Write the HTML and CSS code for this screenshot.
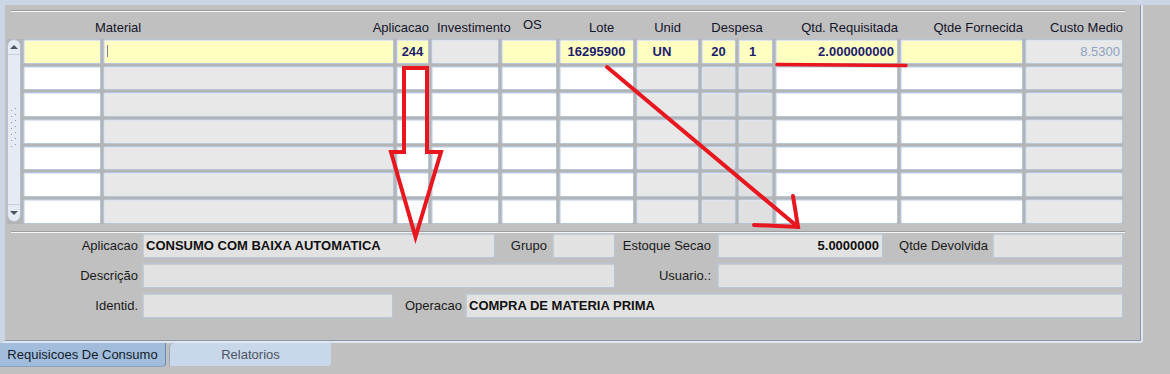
FILE: index.html
```html
<!DOCTYPE html>
<html lang="pt-BR">
<head>
    <meta charset="UTF-8">
    <title>Requisicoes De Consumo</title>
    <link rel="stylesheet" href="styles.css">
</head>
<body>

    <div class="topbar"></div>

    <div class="panel">
        <div class="rule rule-top"></div>

        <!-- cabecalho do bloco -->
        <div class="grid-head">
            <div class="h h-mat">Material</div>
            <div class="h h-apl">Aplicacao</div>
            <div class="h h-inv">Investimento</div>
            <div class="h h-os">OS</div>
            <div class="h h-lote">Lote</div>
            <div class="h h-unid">Unid</div>
            <div class="h h-desp">Despesa</div>
            <div class="h h-qtd">Qtd. Requisitada</div>
            <div class="h h-forn">Qtde Fornecida</div>
            <div class="h h-custo">Custo Medio</div>
        </div>

        <!-- linhas do bloco -->
        <div class="grid" id="grid">
            <div class="scroll">
                <div class="sb-btn sb-up"><span class="tri-up"></span></div>
                <div class="sb-track">
                    <svg class="grip" width="8" height="42" viewBox="0 0 8 42">
                        <g fill="#8c98ac">
                            <rect x="1" y="3" width="1" height="1"/><rect x="5" y="1" width="1" height="1"/>
                            <rect x="1" y="9" width="1" height="1"/><rect x="5" y="7" width="1" height="1"/>
                            <rect x="1" y="15" width="1" height="1"/><rect x="5" y="13" width="1" height="1"/>
                            <rect x="1" y="21" width="1" height="1"/><rect x="5" y="19" width="1" height="1"/>
                            <rect x="1" y="27" width="1" height="1"/><rect x="5" y="25" width="1" height="1"/>
                            <rect x="1" y="33" width="1" height="1"/><rect x="5" y="31" width="1" height="1"/>
                            <rect x="1" y="39" width="1" height="1"/><rect x="5" y="37" width="1" height="1"/>
                        </g>
                    </svg>
                </div>
                <div class="sb-btn sb-down"><span class="tri-down"></span></div>
            </div>

            <!-- registro atual -->
            <div class="cell cur"></div>
            <div class="cell cur"><span class="caret"></span></div>
            <div class="cell cur num c">244</div>
            <div class="cell ro"></div>
            <div class="cell cur"></div>
            <div class="cell cur num c">16295900</div>
            <div class="cell cur num c unid">UN</div>
            <div class="cell cur num c">20</div>
            <div class="cell cur num c one">1</div>
            <div class="cell cur num r">2.000000000</div>
            <div class="cell cur"></div>
            <div class="cell ro muted r">8.5300</div>
        </div>

        <div class="rule rule-mid"></div>

        <!-- detalhes -->
        <div class="detail">
            <div class="drow">
                <div class="lbl w131">Aplicacao</div>
                <div class="fld w353">CONSUMO COM BAIXA AUTOMATICA</div>
                <div class="lbl w57">Grupo</div>
                <div class="fld w63"></div>
                <div class="lbl w102">Estoque Secao</div>
                <div class="fld w166 r">5.0000000</div>
                <div class="lbl w109">Qtde Devolvida</div>
                <div class="fld w131f"></div>
            </div>
            <div class="drow">
                <div class="lbl w131">Descrição</div>
                <div class="fld w473"></div>
                <div class="lbl w102">Usuario.:</div>
                <div class="fld w406"></div>
            </div>
            <div class="drow">
                <div class="lbl w131">Identid.</div>
                <div class="fld w251"></div>
                <div class="lbl w72">Operacao</div>
                <div class="fld w658">COMPRA DE MATERIA PRIMA</div>
            </div>
        </div>
    </div>

    <div class="tabs">
        <div class="tab tab-on">Requisicoes De Consumo</div>
        <div class="tab tab-off">Relatorios</div>
    </div>

    <!-- marcacoes em vermelho -->
    <svg class="marks" width="1170" height="374" viewBox="0 0 1170 374">
        <g fill="none" stroke="#e8161e" stroke-width="4" stroke-linecap="round" stroke-linejoin="miter">
            <polygon points="404,68 427,68 427,152 441,152 415.5,237 391,152 404,152"/>
            <line x1="607" y1="67" x2="798" y2="227"/>
            <polyline points="793,196 798,227 754,225"/>
            <line x1="777" y1="64.5" x2="906" y2="65.5" stroke-width="3.5"/>
        </g>
    </svg>

    <script>
        // linhas vazias do bloco
        const grid = document.getElementById('grid');
        const emptyRow = ['', 'ro', '', '', '', '', 'ro', 'ro2', 'ro2', '', '', 'ro'];
        let html = '';
        for (let i = 0; i < 6; i++) {
            emptyRow.forEach(kind => {
                html += `<div class="cell ${kind}"></div>`;
            });
        }
        grid.insertAdjacentHTML('beforeend', html);
    </script>
</body>
</html>
```

FILE: styles.css
```css
/* base */
* {
    box-sizing: border-box;
}

body {
    margin: 0;
    width: 1170px;
    height: 374px;
    overflow: hidden;
    position: relative;
    background-color: #c0c0c0;
    font-family: "Liberation Sans", Arial, sans-serif;
    font-size: 13px;
    color: #161616;
}

.topbar {
    height: 5px;
    background-color: #ccd5e4;
}

.panel {
    width: 1143px;
    height: 338px;
    padding-top: 5px;
    border-left: 5px solid #ccd5e4;
    border-right: 2px solid #e0e7f2;
    border-bottom: 2px solid #e0e7f2;
    border-bottom-right-radius: 3px;
    box-shadow: inset -1px -1px 0 #8e97a6;
}

/* linhas separadoras */
.rule {
    margin-left: 6px;
    width: 1114px;
    height: 2px;
    border-top: 1px solid #9c9c9c;
    border-bottom: 1px solid #f6f6f6;
}

.rule-mid {
    margin-top: 7px;
}

/* bloco de linhas */
.grid-head,
.grid {
    display: grid;
    grid-template-columns: 14px 78px 291px 33px 68px 56px 75px 63px 35px 35px 123px 123px 98px;
    column-gap: 2px;
    margin-left: 2px;
    width: 1116px;
}

.grid-head {
    height: 27px;
}

.h {
    display: flex;
    align-items: flex-start;
    padding-top: 8px;
    white-space: nowrap;
    line-height: 15px;
    color: #14142a;
}

.h-mat { grid-column: 3; margin-left: -8px; }
.h-apl { grid-column: 4; justify-content: flex-end; }
.h-inv { grid-column: 5; padding-left: 6px; }
.h-os { grid-column: 6; padding-left: 22px; padding-top: 5px; }
.h-lote { grid-column: 7; padding-left: 30px; }
.h-unid { grid-column: 8; justify-content: center; }
.h-desp { grid-column: 9 / span 2; justify-content: center; }
.h-qtd { grid-column: 11; justify-content: flex-end; }
.h-forn { grid-column: 12; justify-content: flex-end; }
.h-custo { grid-column: 13; justify-content: flex-end; }

.grid {
    grid-auto-rows: 24.67px;
    row-gap: 2px;
    background-color: #b4b4b4;
}

.cell {
    display: flex;
    align-items: center;
    padding: 0 3px;
    background-color: #ffffff;
    border: 1px solid #b7c5d8;
    border-radius: 2px;
    box-shadow: inset 1px 1px 0 #dde5f0;
    white-space: nowrap;
}

.cell.cur { background-color: #ffffc2; }
.cell.ro { background-color: #e8e8e8; }
.cell.ro2 { background-color: #e0e0e0; }

.num {
    font-weight: bold;
    color: #1c1c6c;
}

.c { justify-content: center; }
.r { justify-content: flex-end; }
.unid { padding-right: 14px; }
.one { padding-right: 9px; }

.muted {
    color: #8ea2c2;
    padding-right: 2px;
}

.caret {
    width: 1px;
    height: 12px;
    background-color: #7a7aa8;
}

/* barra de rolagem */
.scroll {
    grid-column: 1;
    grid-row: 1 / span 7;
    display: flex;
    flex-direction: column;
    margin-bottom: 2px;
    background-color: #e6ebf3;
    border: 1px solid #b3c0d4;
    border-radius: 7px;
}

.sb-btn {
    height: 15px;
    display: flex;
    align-items: center;
    justify-content: center;
}

.sb-up { border-bottom: 1px solid #c4cede; }
.sb-down { border-top: 1px solid #c4cede; height: 17px; }

.tri-up {
    width: 0;
    height: 0;
    border-left: 4px solid transparent;
    border-right: 4px solid transparent;
    border-bottom: 4px solid #4c5464;
}

.tri-down {
    width: 0;
    height: 0;
    border-left: 4px solid transparent;
    border-right: 4px solid transparent;
    border-top: 4px solid #4c5464;
}

.sb-track {
    flex: 1;
    padding-top: 52px;
    padding-left: 2px;
}

.grip {
    display: block;
}

/* detalhes */
.detail {
    margin-left: 6px;
    display: flex;
    flex-direction: column;
    gap: 5px;
}

.drow {
    display: flex;
    height: 25px;
}

.lbl {
    display: flex;
    align-items: center;
    justify-content: flex-end;
    white-space: nowrap;
    color: #1a1a1a;
}

.fld {
    display: flex;
    align-items: center;
    padding: 0 3px;
    background-color: #e2e2e2;
    border: 1px solid #b9c6d9;
    border-radius: 2px;
    box-shadow: inset 1px 1px 0 #cacaca;
    font-weight: bold;
    color: #101010;
    white-space: nowrap;
}

.fld.r { justify-content: flex-end; }

.w131 { width: 131px; padding-right: 4px; }
.w57 { width: 57px; padding-right: 5px; }
.w102 { width: 102px; padding-right: 6px; }
.w109 { width: 109px; padding-right: 4px; }
.w72 { width: 72px; padding-right: 3px; }

.w353 { width: 353px; }
.w63 { width: 63px; }
.w166 { width: 166px; }
.w131f { width: 131px; }
.w473 { width: 473px; }
.w406 { width: 406px; }
.w251 { width: 251px; }
.w658 { width: 658px; }

/* abas */
.tabs {
    display: flex;
    height: 24px;
}

.tab {
    display: flex;
    align-items: center;
    justify-content: center;
    white-space: nowrap;
}

.tab-on {
    width: 166px;
    background-color: #a2bddc;
    border-right: 1px solid #6f87a8;
    border-bottom: 1px solid #8aa0bc;
    border-bottom-right-radius: 4px;
    color: #121a2a;
}

.tab-off {
    margin-left: 3px;
    width: 162px;
    height: 23px;
    background-color: #c9d7ea;
    border-left: 1px solid #9aa8bc;
    border-top-left-radius: 5px;
    border-bottom-right-radius: 3px;
    color: #4c5464;
}

/* marcacoes */
.marks {
    position: absolute;
    left: 0;
    top: 0;
    pointer-events: none;
}
```
